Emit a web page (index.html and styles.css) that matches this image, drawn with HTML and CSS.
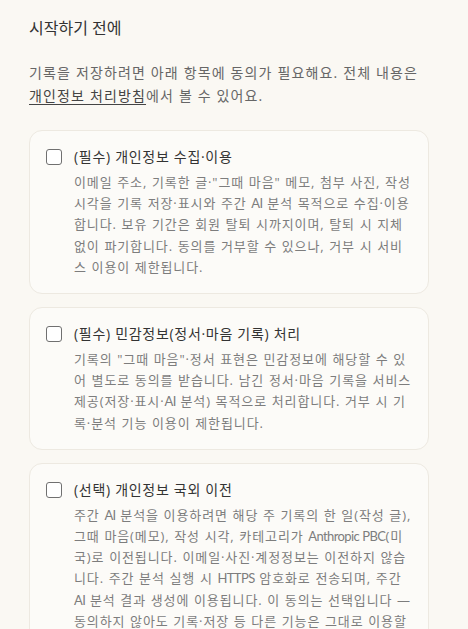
FILE: index.html
```html
<!DOCTYPE html>
<html lang="ko">
<head>
<meta charset="utf-8">
<title>시작하기 전에</title>
<link rel="stylesheet" href="styles.css">
</head>
<body>
<main class="page">
  <h1 class="title">시작하기 전에</h1>
  <p class="intro">기록을 저장하려면 아래 항목에 동의가 필요해요. 전체 내용은 <a class="link" href="#">개인정보 처리방침</a>에서 볼 수 있어요.</p>

  <section class="cards">
    <label class="card">
      <span class="head">
        <span class="box"></span>
        <span class="name">(필수) 개인정보 수집·이용</span>
      </span>
      <span class="desc">이메일 주소, 기록한 글·"그때 마음" 메모, 첨부 사진, 작성 시각을 기록 저장·표시와 주간 <span class="lat">AI</span> 분석 목적으로 수집·이용합니다. 보유 기간은 회원 탈퇴 시까지이며, 탈퇴 시 지체 없이 파기합니다. 동의를 거부할 수 있으나, 거부 시 서비스 이용이 제한됩니다.</span>
    </label>

    <label class="card">
      <span class="head">
        <span class="box"></span>
        <span class="name">(필수) 민감정보(정서·마음 기록) 처리</span>
      </span>
      <span class="desc">기록의 "그때 마음"·정서 표현은 민감정보에 해당할 수 있어 별도로 동의를 받습니다. 남긴 정서·마음 기록을 서비스 제공(저장·표시·<span class="lat">AI</span> 분석) 목적으로 처리합니다. 거부 시 기록·분석 기능 이용이 제한됩니다.</span>
    </label>

    <label class="card">
      <span class="head">
        <span class="box"></span>
        <span class="name">(선택) 개인정보 국외 이전</span>
      </span>
      <span class="desc">주간 <span class="lat">AI</span> 분석을 이용하려면 해당 주 기록의 한 일(작성 글), 그때 마음(메모), 작성 시각, 카테고리가 <span class="lat">Anthropic PBC</span>(미국)로 이전됩니다. 이메일·사진·계정정보는 이전하지 않습니다. 주간 분석 실행 시 <span class="lat">HTTPS</span> 암호화로 전송되며, 주간 <span class="lat">AI</span> 분석 결과 생성에 이용됩니다. 이 동의는 선택입니다 — 동의하지 않아도 기록·저장 등 다른 기능은 그대로 이용할 수 있습니다.</span>
    </label>
  </section>
</main>
</body>
</html>
```

FILE: styles.css
```css
html, body {
  margin: 0;
  padding: 0;
  background: #faf8f3;
}

body {
  font-family: "Open Sans", "Noto Sans CJK KR", sans-serif;
  color: #333;
}

.page {
  padding: 16px 39px 40px 29px;
}

.title {
  margin: 0;
  font-size: 16px;
  line-height: 24px;
  font-weight: 400;
  color: #333;
}

.intro {
  margin: 22px 0 0;
  font-size: 14px;
  line-height: 22.5px;
  letter-spacing: 1.15px;
  color: #666;
}

.link {
  color: #444;
  text-decoration: underline;
  text-underline-offset: 3px;
}

.cards {
  margin-top: 23px;
  display: flex;
  flex-direction: column;
  gap: 13px;
}

.card {
  display: flex;
  flex-direction: column;
  gap: 4px;
  padding: 15px 16px 15px;
  background: #fcfbf8;
  border: 1px solid #ede9e1;
  border-radius: 13px;
}

.head {
  display: flex;
  align-items: center;
  gap: 12px;
  height: 22px;
}

.box {
  flex: none;
  width: 14px;
  height: 14px;
  border: 1px solid #707070;
  border-radius: 3px;
  background: #fff;
}

.name {
  font-size: 14px;
  line-height: 22px;
  letter-spacing: 0.7px;
  color: #333;
}

.desc {
  display: block;
  padding-left: 28px;
  font-size: 13px;
  line-height: 21.2px;
  letter-spacing: 0.9px;
  word-spacing: 0.4px;
  color: #7d7d7d;
}

.lat {
  font-family: "Lato", "Noto Sans CJK KR", sans-serif;
  letter-spacing: -0.6px;
}
```
